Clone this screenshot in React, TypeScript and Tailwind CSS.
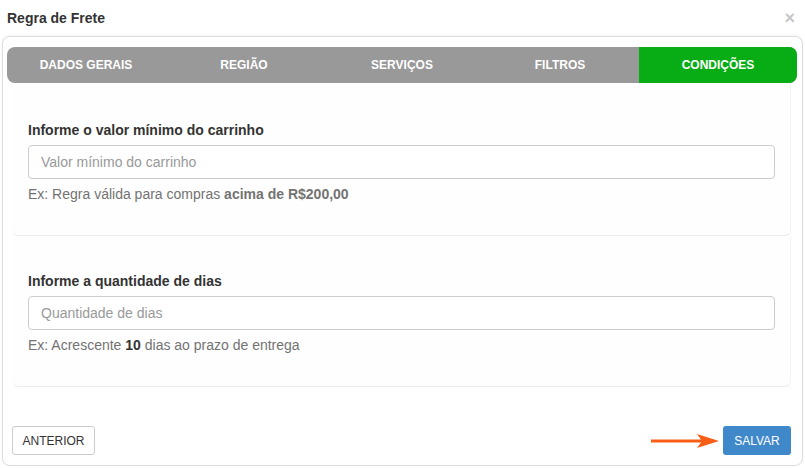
const tabs = ["DADOS GERAIS", "REGIÃO", "SERVIÇOS", "FILTROS", "CONDIÇÕES"];

function Field({
  label,
  placeholder,
  help,
  top,
}: {
  label: string;
  placeholder: string;
  help: React.ReactNode;
  top: string;
}) {
  return (
    <div
      className={`rounded-b-md border-r border-b border-r-[#f4f4f4] border-b-[#ececec] bg-[#fefefe] pr-[15px] pl-4 pb-[31px] ${top}`}
    >
      <label className="block text-[14px] font-bold leading-5 text-[#333]">
        {label}
      </label>
      <input
        className="mt-[5px] block h-[34px] w-full rounded-[4px] border border-[#ccc] bg-white px-3 text-[14px] text-[#555] placeholder:text-[#999] outline-none"
        placeholder={placeholder}
      />
      <p className="mt-[5px] text-[14px] leading-5 text-[#737373]">{help}</p>
    </div>
  );
}

export default function App() {
  return (
    <div
      className="h-[468px] w-[805px] bg-white"
      style={{ fontFamily: '"Liberation Sans", Arial, sans-serif' }}
    >
      <div className="flex h-9 items-center justify-between pl-[7px] pr-[10px]">
        <h4 className="text-[14px] font-bold text-[#333]">Regra de Frete</h4>
        <span className="text-[18px] font-bold leading-none text-[#c8c8c8]">×</span>
      </div>
      <div className="mx-[2px] h-[430px] rounded-lg border border-[#ddd] bg-white shadow-[0_-1px_3px_rgba(0,0,0,0.05)]">
        <div className="pt-[10px] pr-[5px] pl-1">
          <div className="flex h-9 overflow-hidden rounded-lg bg-[#999]">
            {tabs.map((t, i) => (
              <div
                key={t}
                className={`flex flex-1 items-center justify-center text-[12px] font-bold text-white ${
                  i === 4 ? "bg-[#08ad15]" : ""
                }`}
              >
                {t}
              </div>
            ))}
          </div>
        </div>
        <div className="pr-[11px] pl-[9px]">
          <Field
            top="pt-[37px]"
            label="Informe o valor mínimo do carrinho"
            placeholder="Valor mínimo do carrinho"
            help={
              <>
                Ex: Regra válida para compras <b>acima de R$200,00</b>
              </>
            }
          />
          <Field
            top="pt-[35px]"
            label="Informe a quantidade de dias"
            placeholder="Quantidade de dias"
            help={
              <>
                Ex: Acrescente <b className="text-[#333]">10</b> dias ao prazo de entrega
              </>
            }
          />
          <div className="mt-[39px] flex items-center justify-between">
            <button className="h-[29px] w-[83px] rounded-[3px] border border-[#ccc] bg-white text-[12px] text-[#333]">
              ANTERIOR
            </button>
            <div className="flex items-center">
              <svg width="68" height="16" viewBox="0 0 68 16" className="mr-[4px]">
                <line x1="0" y1="8" x2="56" y2="8" stroke="#f85e16" strokeWidth="3" />
                <path d="M46 1 L68 8 L46 15 L51 8 Z" fill="#f85e16" />
              </svg>
              <button className="h-[29px] w-[68px] rounded-[3px] bg-[#3f88c9] text-[12px] text-white">
                SALVAR
              </button>
            </div>
          </div>
        </div>
      </div>
    </div>
  );
}
